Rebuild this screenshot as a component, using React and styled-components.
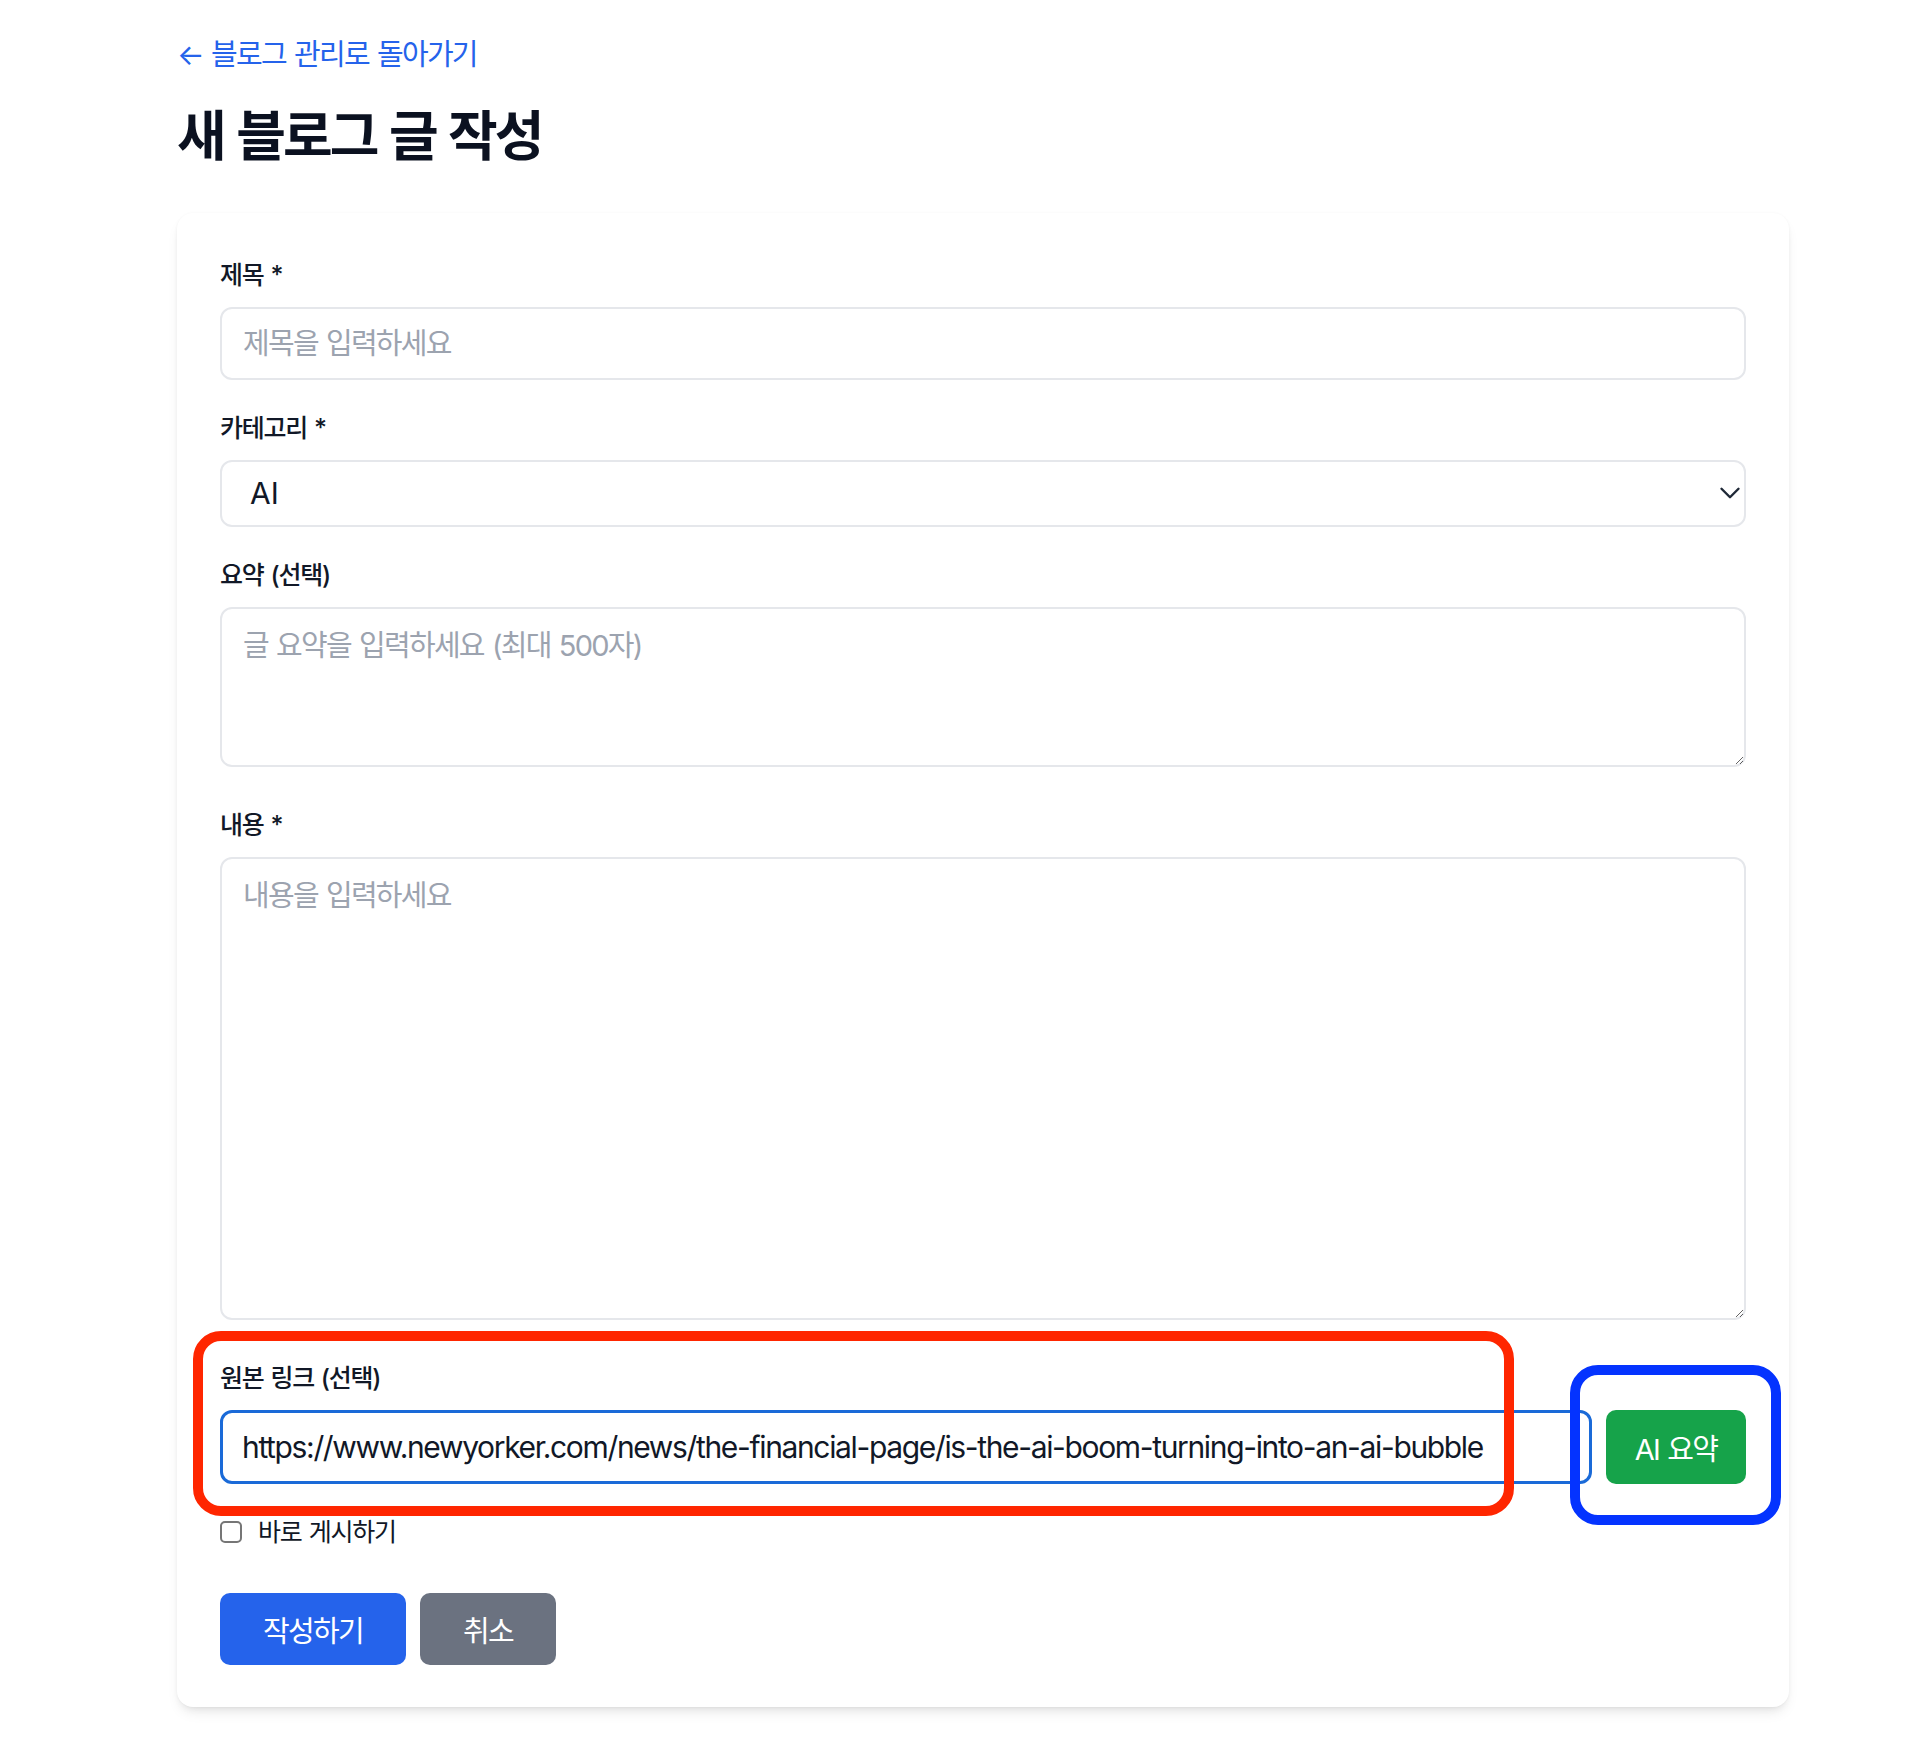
import React from 'react'
import styled, { createGlobalStyle } from 'styled-components'
import { ChevronDown } from 'lucide-react'

const GlobalStyle = createGlobalStyle`
  body {
    margin: 0;
    background: #ffffff;
    font-family: Inter, "Noto Sans CJK KR", sans-serif;
    color: #111827;
  }
  * { box-sizing: border-box; }
`

export default function App () {
  return (
    <Page>
      <GlobalStyle />
      <BackLink href='#'>← 블로그 관리로 돌아가기</BackLink>
      <Title>새 블로그 글 작성</Title>
      <Card>
        <Field>
          <Label>제목 *</Label>
          <Input placeholder='제목을 입력하세요' />
        </Field>
        <Field>
          <Label>카테고리 *</Label>
          <SelectWrap>
            <Select defaultValue='AI'>
              <option>AI</option>
              <option>개발</option>
              <option>일상</option>
            </Select>
            <Chevron size={34} strokeWidth={1.7} />
          </SelectWrap>
        </Field>
        <Field $wide>
          <Label>요약 (선택)</Label>
          <TextArea $height={160} placeholder='글 요약을 입력하세요 (최대 500자)' />
        </Field>
        <Field $wide>
          <Label>내용 *</Label>
          <TextArea $height={463} placeholder='내용을 입력하세요' />
        </Field>
        <LinkRow>
          <LinkColumn>
            <Label>원본 링크 (선택)</Label>
            <LinkInput defaultValue='https://www.newyorker.com/news/the-financial-page/is-the-ai-boom-turning-into-an-ai-bubble' />
          </LinkColumn>
          <Button $color='#16a34a' $width={140} $height={74}>AI 요약</Button>
        </LinkRow>
        <CheckRow>
          <Checkbox type='checkbox' />
          <span>바로 게시하기</span>
        </CheckRow>
        <Actions>
          <Button $color='#2563eb' $width={186} $height={72}>작성하기</Button>
          <Button $color='#6b7280' $width={136} $height={72}>취소</Button>
        </Actions>
        <Mark $color='#ff2600' $left={16} $top={1118} $width={1321} $height={185} />
        <Mark $color='#0433ff' $left={1393} $top={1152} $width={211} $height={160} />
      </Card>
    </Page>
  )
}

const Page = styled.div`
  width: 1612px;
  margin-left: 177px;
  padding: 31px 0 55px;
`

const BackLink = styled.a`
  display: block;
  font-size: 29px;
  line-height: 48px;
  letter-spacing: -0.06em;
  word-spacing: 0.06em;
  color: #2563eb;
  text-decoration: none;
`

const Title = styled.h1`
  margin: 22px 0 0;
  font-size: 54px;
  line-height: 72px;
  letter-spacing: -0.055em;
  word-spacing: 0.05em;
  font-weight: 700;
  color: #0b1120;
`

const Card = styled.div`
  position: relative;
  margin-top: 40px;
  padding: 42px 43px;
  background: #fff;
  border-radius: 16px;
  box-shadow: 0 8px 14px -4px rgba(0, 0, 0, 0.1), 0 4px 8px -4px rgba(0, 0, 0, 0.08), 0 0 3px rgba(0, 0, 0, 0.04);
`

const Field = styled.div`
  display: flex;
  flex-direction: column;
  margin-bottom: ${p => (p.$wide ? 38 : 28)}px;
`

const Label = styled.label`
  display: block;
  margin-bottom: 12px;
  font-size: 25px;
  line-height: 40px;
  letter-spacing: -0.05em;
  word-spacing: 0.06em;
  font-weight: 500;
  color: #111827;
`

const fieldBase = `
  width: 100%;
  font-family: Inter, "Noto Sans CJK KR", sans-serif;
  font-size: 29px;
  line-height: 45px;
  letter-spacing: -0.06em;
  word-spacing: 0.06em;
  color: #111827;
  background: #fff;
  border: 2px solid #e5e7eb;
  border-radius: 12px;
  outline: none;
  &::placeholder { color: #9ca3af; }
`

const Input = styled.input`
  ${fieldBase}
  display: block;
  height: 73px;
  padding: 12px 21px;
`

const SelectWrap = styled.div`
  position: relative;
`

const Select = styled.select`
  ${fieldBase}
  display: block;
  height: 67px;
  padding: 0 60px 0 28px;
  font-size: 30px;
  letter-spacing: 0;
  appearance: none;
  -webkit-appearance: none;
`

const Chevron = styled(ChevronDown)`
  position: absolute;
  right: -1px;
  top: 16px;
  color: #1f2937;
  pointer-events: none;
`

const TextArea = styled.textarea`
  ${fieldBase}
  display: block;
  height: ${p => p.$height}px;
  padding: 14px 21px;
  resize: vertical;
`

const LinkRow = styled.div`
  display: flex;
  align-items: flex-end;
  gap: 14px;
  margin-bottom: 28px;
`

const LinkColumn = styled.div`
  flex: 1;
  display: flex;
  flex-direction: column;
`

const LinkInput = styled.input`
  ${fieldBase}
  display: block;
  height: 74px;
  padding: 11px 19px;
  border: 3px solid #1a6ad8;
  font-size: 30px;
  letter-spacing: -0.045em;
  word-spacing: 0;
`

const Button = styled.button`
  flex: none;
  width: ${p => p.$width}px;
  height: ${p => p.$height}px;
  padding: 0;
  border: none;
  border-radius: 10px;
  background: ${p => p.$color};
  color: #fff;
  font-family: Inter, "Noto Sans CJK KR", sans-serif;
  font-size: 29px;
  letter-spacing: -0.06em;
  word-spacing: 0.06em;
  cursor: pointer;
`

const CheckRow = styled.label`
  display: flex;
  align-items: center;
  gap: 16px;
  font-size: 25px;
  line-height: 40px;
  letter-spacing: -0.05em;
  word-spacing: 0.06em;
  color: #111827;
`

const Checkbox = styled.input`
  flex: none;
  width: 22px;
  height: 22px;
  margin: 0;
  appearance: none;
  -webkit-appearance: none;
  border: 2px solid #767676;
  border-radius: 5px;
  background: #fff;
`

const Actions = styled.div`
  display: flex;
  gap: 14px;
  margin-top: 41px;
`

const Mark = styled.div`
  position: absolute;
  left: ${p => p.$left}px;
  top: ${p => p.$top}px;
  width: ${p => p.$width}px;
  height: ${p => p.$height}px;
  border: 10px solid ${p => p.$color};
  border-radius: 28px;
  pointer-events: none;
`
